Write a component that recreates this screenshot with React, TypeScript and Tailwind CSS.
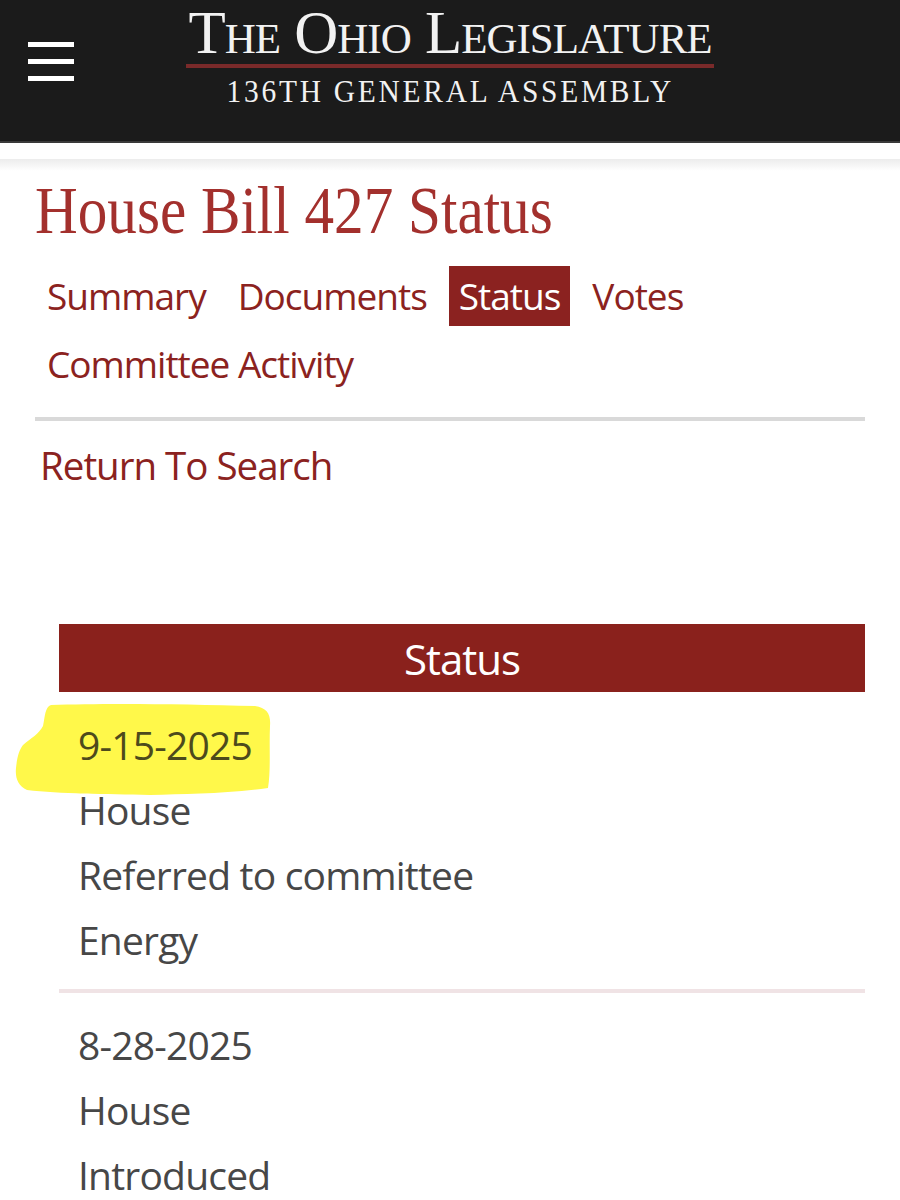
import React from 'react';

const tabs = ['Summary', 'Documents', 'Status', 'Votes'];

const entries = [
  { date: '9-15-2025', lines: ['House', 'Referred to committee', 'Energy'], marked: true },
  { date: '8-28-2025', lines: ['House', 'Introduced'], marked: false },
];

// marker stroke over the first date
function Highlight() {
  return (
    <svg className="absolute left-[-63px] top-[-10px]" width="262" height="96" viewBox="0 0 262 96">
      <path
        d="M36 3 C90 1 170 2 240 4 C252 6 256 12 255 24 C254 45 256 68 253 86 C210 92 170 92 135 93 C90 92 45 92 12 88 C3 84 0 76 1 66 C2 56 4 48 8 43 C16 36 24 32 28 24 C30 14 30 5 36 3 Z"
        fill="#fff84a"
      />
    </svg>
  );
}

export default function App() {
  return (
    <div className="min-h-[1200px] bg-white font-['Open_Sans',sans-serif]">
      <header className="h-[143px] bg-[#1b1b1b] flex items-start border-b-2 border-[#3a3a3a]">
        <button className="mt-[42px] ml-[28px] flex flex-col gap-[12px]">
          <span className="block w-[46px] h-[5px] bg-white" />
          <span className="block w-[46px] h-[5px] bg-white" />
          <span className="block w-[46px] h-[5px] bg-white" />
        </button>
        <div className="ml-[111px] mt-[6px] flex flex-col items-center w-[530px] font-['Liberation_Serif',serif] text-[#f2f2f2]">
          <div className="text-[61px] leading-[54px] [font-variant:small-caps] tracking-[-1px] whitespace-nowrap">
            The Ohio Legislature
          </div>
          <div className="mt-[4px] w-[528px] h-[4px] bg-[#7a2a2a]" />
          <div className="mt-[8px] text-[32px] leading-[30px] tracking-[3px] scale-x-[0.92] whitespace-nowrap">
            136TH GENERAL ASSEMBLY
          </div>
        </div>
      </header>
      <div className="h-[16px] bg-white" />
      <div className="h-[12px] bg-gradient-to-b from-[#ececec] to-white" />

      <main className="px-[35px]">
        <h1 className="mt-[1px] font-['Liberation_Serif',serif] text-[#a3302d] text-[68px] leading-[76px] origin-left scale-x-[0.87] whitespace-nowrap">
          House Bill 427 Status
        </h1>

        <nav className="mt-[18px] pl-[2px] text-[#8b2220] text-[37px] tracking-[-1px]">
          <div className="flex items-center gap-[12px]">
            {tabs.map((t) => (
              <a
                key={t}
                className={
                  t === 'Status'
                    ? 'px-[10px] h-[60px] leading-[60px] bg-[#8b2220] text-white'
                    : 'px-[10px] h-[60px] leading-[60px]'
                }
              >
                {t}
              </a>
            ))}
          </div>
          <div className="mt-[8px] px-[10px] leading-[60px]">Committee Activity</div>
        </nav>

        <div className="mt-[23px] h-[4px] bg-[#d9d9d9]" />

        <a className="block mt-[19px] pl-[5px] text-[#8b2220] text-[38.5px] leading-[50px] tracking-[-1px]">
          Return To Search
        </a>

        <section className="mt-[134px] ml-[24px]">
          <div className="h-[68px] bg-[#8a211c] text-white text-[42px] tracking-[-1px] flex items-center justify-center">
            Status
          </div>
          {entries.map((e, i) => (
            <div key={e.date}>
              {i > 0 && <div className="mt-[17px] h-[4px] bg-[#f0e3e5]" />}
              <div className={i === 0 ? 'pt-[20px] pl-[19px]' : 'pt-[19px] pl-[19px]'}>
                <div className="relative">
                  {e.marked && <Highlight />}
                  <div
                    className={
                      e.marked
                        ? 'relative text-[#4d4a1c] text-[39px] leading-[65px] tracking-[-0.8px]'
                        : 'text-[#474747] text-[39px] leading-[65px] tracking-[-0.8px]'
                    }
                  >
                    {e.date}
                  </div>
                </div>
                {e.lines.map((l) => (
                  <div key={l} className="text-[#474747] text-[39px] leading-[65px] tracking-[-0.8px]">
                    {l}
                  </div>
                ))}
              </div>
            </div>
          ))}
        </section>
      </main>
    </div>
  );
}
